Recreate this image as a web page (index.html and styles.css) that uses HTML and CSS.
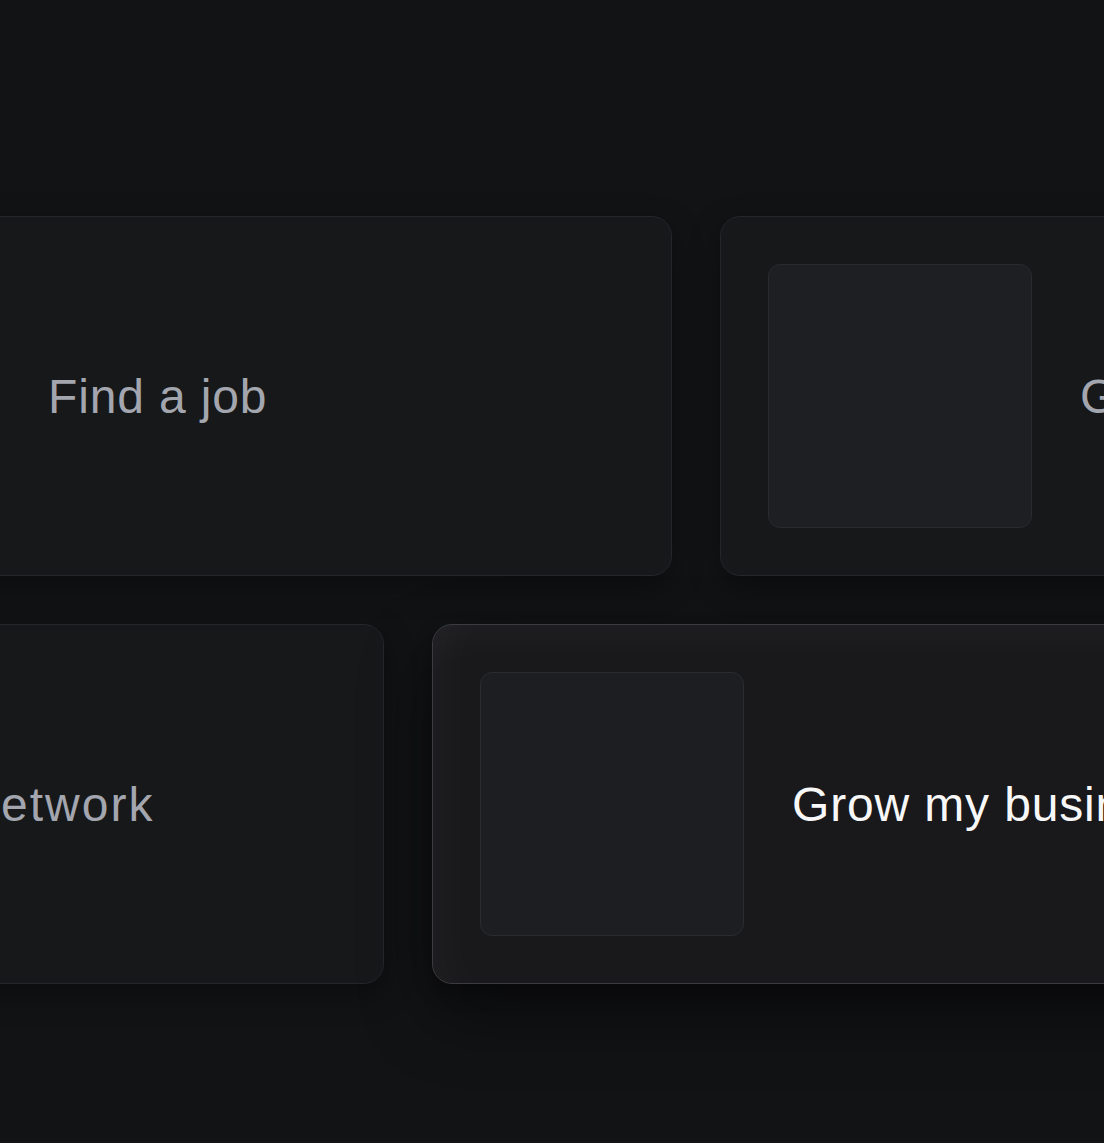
FILE: index.html
```html
<!DOCTYPE html>
<html lang="en">
<head>
    <meta charset="UTF-8">
    <meta name="viewport" content="width=device-width, initial-scale=1.0">
    <title>Goals</title>
    <link rel="stylesheet" href="styles.css">
</head>
<body>
    <div class="stage">
        <div class="row row-top">
            <div class="card card-a">
                <div class="thumb"></div>
                <span class="label">Find a job</span>
            </div>
            <div class="card card-b">
                <div class="thumb"></div>
                <span class="label">Get hired faster</span>
            </div>
        </div>
        <div class="row row-bottom">
            <div class="card card-c">
                <div class="thumb"></div>
                <span class="label">Build my network</span>
            </div>
            <div class="card card-d active">
                <div class="thumb"></div>
                <span class="label">Grow my business</span>
            </div>
        </div>
    </div>
</body>
</html>
```

FILE: styles.css
```css
html, body {
    margin: 0;
    height: 100%;
}
body {
    background: #121315;
    font-family: "Liberation Sans", Arial, sans-serif;
    overflow: hidden;
}
.stage {
    padding-top: 216px;
    display: flex;
    flex-direction: column;
    gap: 48px;
}
.row {
    display: flex;
    gap: 48px;
    flex-shrink: 0;
}
.row-top {
    margin-left: -312px;
}
.row-bottom {
    margin-left: -603px;
}
.card {
    box-sizing: border-box;
    flex-shrink: 0;
    height: 360px;
    padding: 47px;
    display: flex;
    align-items: center;
    gap: 48px;
    background: #17181a;
    border: 1px solid #25262a;
    border-radius: 20px;
    box-shadow: 0 10px 30px rgba(0,0,0,0.35);
}
.card-a { width: 984px; }
.card-b { width: 900px; }
.card-c { width: 987px; }
.card-d { width: 1000px; }
.thumb {
    box-sizing: border-box;
    flex-shrink: 0;
    width: 264px;
    height: 264px;
    background: #1e1f22;
    border: 1px solid #292a2e;
    border-radius: 12px;
}
.label {
    font-size: 48px;
    letter-spacing: 0.85px;
    color: #a3a6ae;
    white-space: nowrap;
}
.card-c .label {
    letter-spacing: 2px;
}
.card.active {
    background: #19191c;
    border-color: #3b3c40;
    box-shadow: inset 0 40px 50px -30px rgba(255,255,255,0.035),
                inset 40px 0 50px -30px rgba(255,255,255,0.03),
                0 30px 70px rgba(0,0,0,0.45),
                0 8px 20px rgba(0,0,0,0.3);
}
.card.active .label {
    color: #f7f7f8;
}
.card.active .thumb {
    background: #1d1e21;
    border-color: #2a2b2f;
}
```
